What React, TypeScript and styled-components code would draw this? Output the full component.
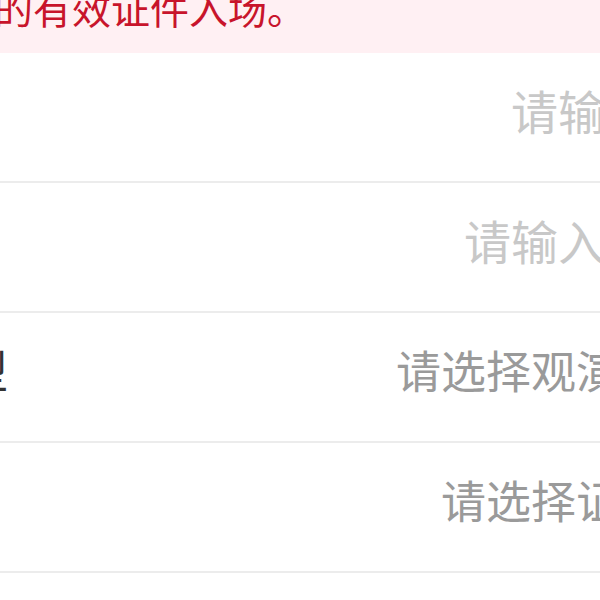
import React, { FC } from "react";
import styled, { createGlobalStyle } from "styled-components";

const GlobalStyle = createGlobalStyle`
  html, body {
    margin: 0;
    padding: 0;
    background: #fff;
    overflow: hidden;
  }
  body {
    font-family: "Noto Sans CJK SC", "Noto Sans", sans-serif;
  }
`;

const Page = styled.div`
  width: 960px;
  margin-left: -200px;
  background: #fff;
`;

const Notice = styled.div`
  margin-top: -75px;
  padding: 0 0 18px 194px;
  background: #fff0f3;
  color: #c8142b;
  font-size: 39px;
  line-height: 55px;
`;

const NoticeLine = styled.span`
  display: block;
  white-space: nowrap;
`;

const Form = styled.div`
  display: flex;
  flex-direction: column;
`;

const Row = styled.div`
  display: flex;
  align-items: center;
  justify-content: space-between;
  box-sizing: border-box;
  height: 130px;
  padding: 0 14px 16px 28px;
  border-bottom: 2px solid #ececec;
`;

const Label = styled.span<{ $shown: boolean }>`
  font-size: 45px;
  color: #333;
  white-space: nowrap;
  visibility: ${(p) => (p.$shown ? "visible" : "hidden")};
`;

const Value = styled.span<{ $kind: "input" | "select" }>`
  white-space: nowrap;
  font-size: ${(p) => (p.$kind === "input" ? "47px" : "45px")};
  color: ${(p) => (p.$kind === "input" ? "#c8c8c8" : "#9a9a9a")};
  margin-right: ${(p) => (p.$kind === "input" ? "0" : "-10px")};
`;

interface Field {
  label: string;
  hint: string;
  kind: "input" | "select";
}

const fields: Field[] = [
  { label: "姓名", hint: "请输入姓名", kind: "input" },
  { label: "手机号", hint: "请输入手机号", kind: "input" },
  { label: "证件类型", hint: "请选择观演人类型", kind: "select" },
  { label: "证件", hint: "请选择证件类型", kind: "select" },
  { label: "证件号", hint: "请输入证件号码", kind: "input" },
];

const App: FC = () => {
  return (
    <>
      <GlobalStyle />
      <Page>
        <Notice>
          <NoticeLine>温馨提示：每个订单需填写观演人信息，请携带</NoticeLine>
          <NoticeLine>的有效证件入场。</NoticeLine>
        </Notice>
        <Form>
          {fields.map((f, i) => (
            <Row key={i}>
              <Label $shown={i === 2}>{f.label}</Label>
              <Value $kind={f.kind}>{f.hint}</Value>
            </Row>
          ))}
        </Form>
      </Page>
    </>
  );
};

export default App;
